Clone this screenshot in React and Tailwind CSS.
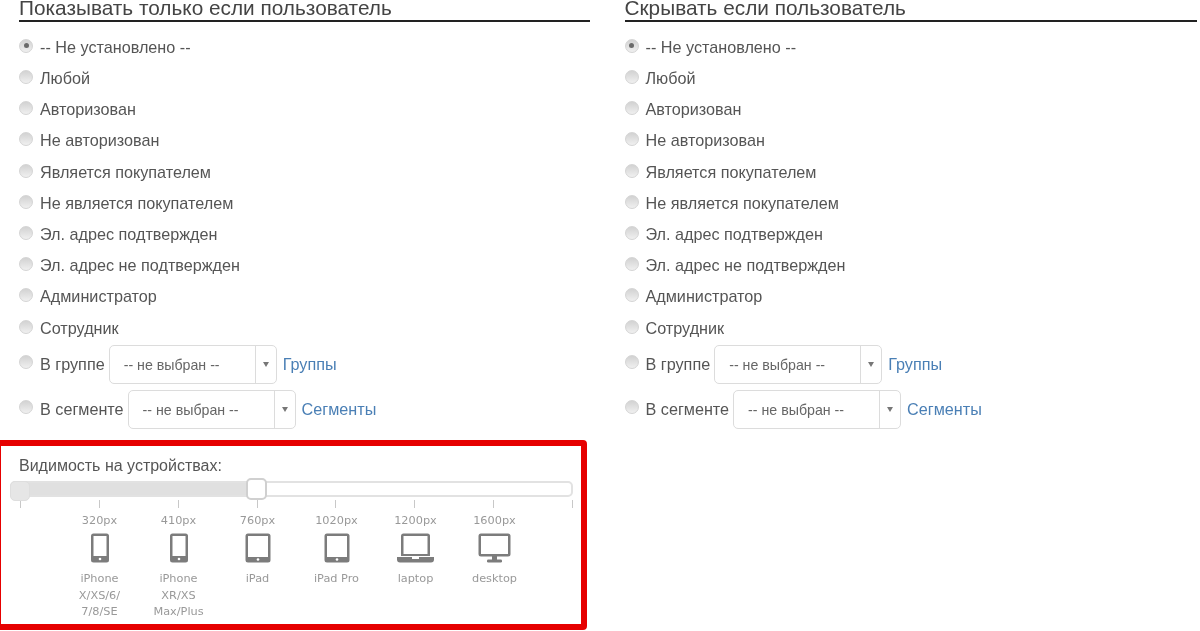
const OPTIONS = [
  '-- Не установлено --',
  'Любой',
  'Авторизован',
  'Не авторизован',
  'Является покупателем',
  'Не является покупателем',
  'Эл. адрес подтвержден',
  'Эл. адрес не подтвержден',
  'Администратор',
  'Сотрудник',
];

function Radio({ checked }) {
  return (
    <span className="w-[14px] h-[14px] shrink-0 rounded-full border border-[#d4d4d4] bg-gradient-to-b from-[#d2d2d2] to-[#f0f0f0] flex items-center justify-center">
      {checked && <span className="w-[5px] h-[5px] rounded-full bg-[#6a6a6a]"></span>}
    </span>
  );
}

function PickSelect() {
  return (
    <div className="w-[168px] h-[39px] shrink-0 border border-[#dcdcdc] rounded-[5px] bg-white flex items-center text-[14.2px] text-[#666]">
      <span className="flex-1 pl-[14px] pt-[1px] whitespace-nowrap">-- не выбран --</span>
      <span className="w-[21px] h-full border-l border-[#dcdcdc] flex items-center justify-center">
        <span className="w-0 h-0 border-x-[3.5px] border-x-transparent border-t-[5px] border-t-[#777]"></span>
      </span>
    </div>
  );
}

function RuleColumn({ title }) {
  return (
    <div className="pl-[19px]">
      <div className="-mt-[3px] h-[24.5px] border-b-2 border-[#222] text-[20.8px] leading-[21px] text-[#444] whitespace-nowrap">{title}</div>
      <div className="mt-[10.4px] flex flex-col">
        {OPTIONS.map((o, i) => (
          <div key={o} className="h-[31.2px] flex items-start gap-[7px] text-[16.2px] leading-[31.2px] text-[#555]">
            <span className="pt-[7px]"><Radio checked={i === 0} /></span>
            <span className="whitespace-nowrap">{o}</span>
          </div>
        ))}
        <div className="-mt-[1.4px] h-[45px] flex items-center text-[16.2px] text-[#555]">
          <span className="-mt-[5px]"><Radio /></span>
          <span className="ml-[7px] mr-[4px] -mt-[2px] whitespace-nowrap">В группе</span>
          <PickSelect />
          <a className="ml-[6px] -mt-[2px] text-[#4a7fb5] whitespace-nowrap">Группы</a>
        </div>
        <div className="h-[45px] flex items-center text-[16.2px] text-[#555]">
          <span className="-mt-[5px]"><Radio /></span>
          <span className="ml-[7px] mr-[4px] -mt-[2px] whitespace-nowrap">В сегменте</span>
          <PickSelect />
          <a className="ml-[6px] -mt-[2px] text-[#4a7fb5] whitespace-nowrap">Сегменты</a>
        </div>
      </div>
    </div>
  );
}

function PhoneIcon() {
  return (
    <svg width="20" height="30" viewBox="0 0 20 30">
      <rect x="1" y="0.5" width="18" height="29" rx="2.5" fill="#7c7c7c" />
      <rect x="3.5" y="3" width="13" height="20" fill="#fff" />
      <circle cx="10" cy="26" r="1.3" fill="#fff" />
    </svg>
  );
}

function TabletIcon() {
  return (
    <svg width="26" height="30" viewBox="0 0 26 30">
      <rect x="0.5" y="0.5" width="25" height="29" rx="2.5" fill="#7c7c7c" />
      <rect x="3" y="3" width="20" height="21" fill="#fff" />
      <circle cx="13" cy="26.5" r="1.3" fill="#fff" />
    </svg>
  );
}

function LaptopIcon() {
  return (
    <svg width="37" height="30" viewBox="0 0 37 30">
      <path d="M4 3a2.5 2.5 0 0 1 2.5-2.5h24A2.5 2.5 0 0 1 33 3v20H4z" fill="#7c7c7c" />
      <rect x="6.5" y="3" width="24" height="18" fill="#fff" />
      <path d="M0 24h37v2.5a3 3 0 0 1-3 3H3a3 3 0 0 1-3-3z" fill="#7c7c7c" />
      <rect x="15" y="24" width="7" height="2" fill="#fff" />
    </svg>
  );
}

function DesktopIcon() {
  return (
    <svg width="33" height="30" viewBox="0 0 33 30">
      <rect x="0.5" y="0.5" width="32" height="23" rx="2.5" fill="#7c7c7c" />
      <rect x="3" y="3" width="27" height="18" fill="#fff" />
      <rect x="14" y="23" width="5" height="4" fill="#7c7c7c" />
      <rect x="9" y="26.5" width="15" height="3" rx="1.2" fill="#7c7c7c" />
    </svg>
  );
}

const DEVICES = [
  { px: '320px', icon: <PhoneIcon />, name: ['iPhone', 'X/XS/6/', '7/8/SE'] },
  { px: '410px', icon: <PhoneIcon />, name: ['iPhone', 'XR/XS', 'Max/Plus'] },
  { px: '760px', icon: <TabletIcon />, name: ['iPad'] },
  { px: '1020px', icon: <TabletIcon />, name: ['iPad Pro'] },
  { px: '1200px', icon: <LaptopIcon />, name: ['laptop'] },
  { px: '1600px', icon: <DesktopIcon />, name: ['desktop'] },
];

function DeviceBox() {
  return (
    <div className="mt-[8px] -ml-[24px] w-[592px] h-[190px] border-[6px] border-[#e60000] rounded-[4px] bg-white pl-[8px] pr-[8px] pt-[10px]">
      <div className="pl-[10px] text-[16px] leading-[20px] text-[#555]">Видимость на устройствах:</div>
      {/* slider */}
      <div className="relative mt-[5px] ml-[1px] w-[563px] h-[16px] rounded-[5px] border-2 border-[#e2e2e2] bg-white">
        <div className="h-full w-[238px] bg-[#e0e0e0]"></div>
        <div className="absolute -left-[2px] -top-[2px] w-[20px] h-[20px] rounded-[5px] border border-[#dedede] bg-[#e6e6e6]"></div>
        <div className="absolute left-[234px] -top-[5px] w-[21px] h-[22px] rounded-[5px] border-2 border-[#d0d0d0] bg-white"></div>
      </div>
      <div className="mt-[3px] ml-[11px] w-[553px] flex justify-between">
        {[0, 1, 2, 3, 4, 5, 6, 7].map((t) => (
          <span key={t} className="w-px h-[8px] bg-[#c8c8c8]"></span>
        ))}
      </div>
      <div className="mt-[6px] ml-[51px] flex font-['DejaVu_Sans',sans-serif] text-[11.3px] text-[#999]">
        {DEVICES.map((d) => (
          <div key={d.px} className="w-[79px] flex flex-col items-center">
            <div className="leading-[14px]">{d.px}</div>
            <div className="mt-[5px] h-[30px]">{d.icon}</div>
            <div className="mt-[8px] leading-[16.5px] text-center whitespace-nowrap">
              {d.name.map((line) => <div key={line}>{line}</div>)}
            </div>
          </div>
        ))}
      </div>
    </div>
  );
}

export default function App() {
  return (
    <div className="w-[1200px] h-[631px] overflow-hidden bg-white flex font-['Liberation_Sans',sans-serif] blur-[0.5px]">
      <div className="w-[590px] shrink-0">
        <RuleColumn title="Показывать только если пользователь" />
        <div className="pl-[19px]"><DeviceBox /></div>
      </div>
      <div className="w-[591.5px] ml-[15.5px]">
        <RuleColumn title="Скрывать если пользователь" />
      </div>
    </div>
  );
}
